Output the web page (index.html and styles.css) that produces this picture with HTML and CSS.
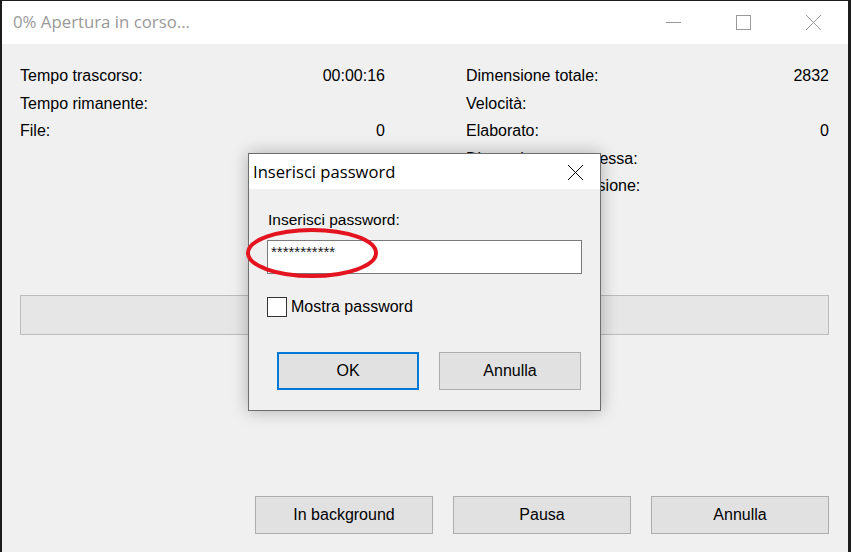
FILE: index.html
```html
<!DOCTYPE html>
<html lang="it">
<head>
<meta charset="utf-8">
<title>0% Apertura in corso...</title>
<link rel="stylesheet" href="styles.css">
</head>
<body>
<div class="window">
  <div class="titlebar">
    <div class="title">0% Apertura in corso...</div>
    <div class="controls">
      <div class="ctl"><svg width="15" height="15" viewBox="0 0 15 15"><path d="M0 7.5H15" stroke="#999" stroke-width="1"/></svg></div>
      <div class="ctl"><svg width="15" height="15" viewBox="0 0 15 15"><rect x="0.5" y="0.5" width="14" height="14" fill="none" stroke="#999" stroke-width="1"/></svg></div>
      <div class="ctl"><svg width="15" height="15" viewBox="0 0 15 15"><path d="M0 0L15 15M15 0L0 15" stroke="#999" stroke-width="1"/></svg></div>
    </div>
  </div>
  <div class="content">
    <div class="stats">
      <div class="col">
        <div class="row"><span>Tempo trascorso:</span><span>00:00:16</span></div>
        <div class="row"><span>Tempo rimanente:</span><span></span></div>
        <div class="row"><span>File:</span><span>0</span></div>
      </div>
      <div class="col">
        <div class="row"><span>Dimensione totale:</span><span>2832</span></div>
        <div class="row"><span>Velocità:</span><span></span></div>
        <div class="row"><span>Elaborato:</span><span>0</span></div>
        <div class="row"><span>Dimensione compressa:</span><span></span></div>
        <div class="row"><span>Rapporto compressione:</span><span></span></div>
      </div>
    </div>
    <div class="progress"></div>
    <div class="actions">
      <button class="btn">In background</button>
      <button class="btn">Pausa</button>
      <button class="btn">Annulla</button>
    </div>
  </div>
</div>

<div class="dialog">
  <div class="dlg-title">
    <span>Inserisci password</span>
    <svg class="dlg-close" width="15" height="15" viewBox="0 0 15 15"><path d="M0 0L15 15M15 0L0 15" stroke="#000" stroke-width="1"/></svg>
  </div>
  <div class="dlg-body">
    <div class="dlg-label">Inserisci password:</div>
    <div class="pwd">***********</div>
    <div class="check-row"><span class="checkbox"></span><span>Mostra password</span></div>
    <div class="dlg-buttons">
      <button class="btn dbtn default">OK</button>
      <button class="btn dbtn">Annulla</button>
    </div>
  </div>
</div>

<svg class="mark" width="140" height="56" viewBox="0 0 140 56"><ellipse cx="68" cy="27" rx="64" ry="23" fill="none" stroke="#e3141f" stroke-width="4"/></svg>
</body>
</html>
```
FILE: styles.css
```css
html, body {
  margin: 0;
  padding: 0;
  background: #1c1c1c;
}
body {
  width: 851px;
  height: 552px;
  overflow: hidden;
  position: relative;
  font-family: "Liberation Sans", Arial, sans-serif;
  font-size: 16px;
  color: #000;
}
.window {
  box-sizing: border-box;
  width: 851px;
  height: 552px;
  border-top: 1px solid #1c1c1c;
  border-left: 2px solid #1c1c1c;
  border-right: 3px solid #1c1c1c;
  background: #f0f0f0;
  display: flex;
  flex-direction: column;
}
.titlebar {
  height: 43px;
  background: #fff;
  display: flex;
  align-items: center;
  justify-content: space-between;
}
.title {
  padding-left: 11px;
  font-family: "Open Sans", "Noto Sans", sans-serif;
  font-size: 16.8px;
  color: #999;
  padding-bottom: 2px;
}
.controls {
  display: flex;
  height: 100%;
}
.ctl {
  width: 70px;
  display: flex;
  align-items: center;
  justify-content: center;
}
.ctl svg { display: block; }
.content {
  flex: 1;
  display: flex;
  flex-direction: column;
  padding: 18px 19px 18px 18px;
}
.stats {
  display: grid;
  grid-template-columns: 365px 363px;
  column-gap: 81px;
}
.row {
  display: flex;
  justify-content: space-between;
  height: 27.5px;
  line-height: 28.5px;
  white-space: nowrap;
}
.progress {
  margin-top: 95.5px;
  height: 40px;
  box-sizing: border-box;
  border: 1px solid #bcbcbc;
  background: #e6e6e6;
}
.actions {
  margin-top: auto;
  display: flex;
  justify-content: flex-end;
  gap: 20px;
}
.btn {
  font-family: "Liberation Sans", Arial, sans-serif;
  font-size: 16px;
  color: #000;
  background: #e1e1e1;
  border: 1px solid #adadad;
  height: 38px;
  width: 178px;
  padding: 0;
  margin: 0;
}
.dialog {
  position: absolute;
  left: 248px;
  top: 153px;
  width: 353px;
  height: 258px;
  box-sizing: border-box;
  border: 1px solid #6e6e6e;
  background: #f0f0f0;
  box-shadow: 0 0 16px rgba(0,0,0,0.28);
  display: flex;
  flex-direction: column;
}
.dlg-title {
  height: 35px;
  background: #fff;
  display: flex;
  align-items: center;
  justify-content: space-between;
  padding: 0 17px 0 4px;
  font-family: "Open Sans", "Noto Sans", sans-serif;
  font-size: 16.6px;
}
.dlg-close { display: block; margin-top: 2px; }
.dlg-body {
  padding: 21px 18px 0 18px;
  display: flex;
  flex-direction: column;
}
.dlg-label {
  line-height: 19px;
  padding-left: 1px;
  font-size: 15.5px;
}
.pwd {
  margin-top: 11px;
  height: 34px;
  box-sizing: border-box;
  border: 1px solid #7a7a7a;
  background: #fff;
  padding: 2px 0 0 3px;
  font-size: 15px;
  line-height: 18px;
  color: #1a1a1a;
}
.check-row {
  margin-top: 23px;
  display: flex;
  align-items: center;
  gap: 4px;
  height: 20px;
}
.checkbox {
  width: 20px;
  height: 20px;
  box-sizing: border-box;
  border: 1px solid #333;
  background: #fff;
}
.dlg-buttons {
  margin-top: 35px;
  margin-right: 1px;
  display: flex;
  justify-content: flex-end;
  gap: 20px;
}
.dbtn { width: 142px; }
.default { border: 2px solid #0078d7; }
.mark {
  position: absolute;
  left: 244px;
  top: 226px;
}
```
